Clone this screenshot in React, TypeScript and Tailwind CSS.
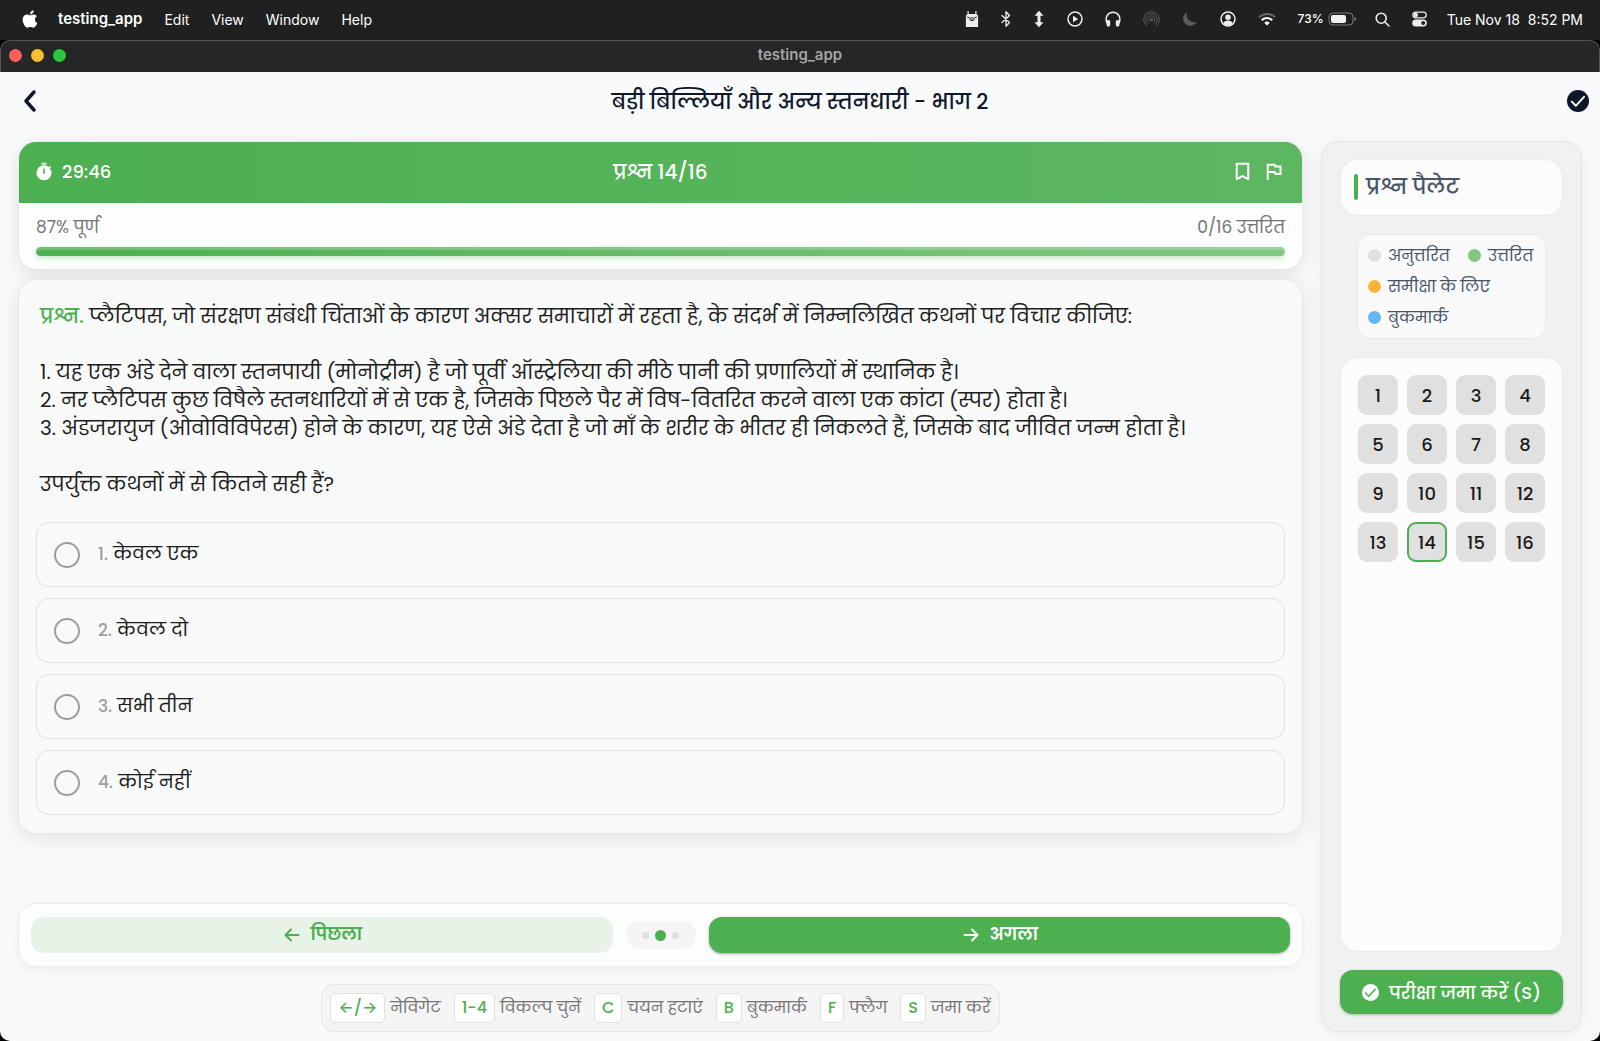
import React, { useState } from 'react';
import { FaApple } from 'react-icons/fa';
import { MdTimer } from 'react-icons/md';

interface Shortcut { keys: string; label: string; }

const MENUS = ['Edit', 'View', 'Window', 'Help'];

const QUESTION_INTRO = 'प्लैटिपस, जो संरक्षण संबंधी चिंताओं के कारण अक्सर समाचारों में रहता है, के संदर्भ में निम्नलिखित कथनों पर विचार कीजिए:';
const STATEMENTS = [
    '1. यह एक अंडे देने वाला स्तनपायी (मोनोट्रीम) है जो पूर्वी ऑस्ट्रेलिया की मीठे पानी की प्रणालियों में स्थानिक है।',
    '2. नर प्लैटिपस कुछ विषैले स्तनधारियों में से एक है, जिसके पिछले पैर में विष-वितरित करने वाला एक कांटा (स्पर) होता है।',
    '3. अंडजरायुज (ओवोविविपेरस) होने के कारण, यह ऐसे अंडे देता है जो माँ के शरीर के भीतर ही निकलते हैं, जिसके बाद जीवित जन्म होता है।',
];
const OPTIONS = ['केवल एक', 'केवल दो', 'सभी तीन', 'कोई नहीं'];

const LEGEND = [
    { color: 'bg-[#e0e0e0]', label: 'अनुत्तरित' },
    { color: 'bg-[#81c784]', label: 'उत्तरित' },
    { color: 'bg-[#ffb435]', label: 'समीक्षा के लिए' },
    { color: 'bg-[#64b5f6]', label: 'बुकमार्क' },
];

const SHORTCUTS: Shortcut[] = [
    { keys: '←/→', label: 'नेविगेट' },
    { keys: '1-4', label: 'विकल्प चुनें' },
    { keys: 'C', label: 'चयन हटाएं' },
    { keys: 'B', label: 'बुकमार्क' },
    { keys: 'F', label: 'फ्लैग' },
    { keys: 'S', label: 'जमा करें' },
];

const TOTAL = 16;

const StatusIcons = () => (
    <>
        <svg width="14" height="18" viewBox="0 0 14 18" fill="#ececec">
            <path d="M2.5 1h1.2v4h-1.2zM10.3 1h1.2v4h-1.2zM3.5 4h7c1.6 0 2.6 1 2.6 2.6V17H.9V6.600C.9 5 1.900 4 3.500 4z" />
            <path d="M2.200 7l2.300.8M11.800 7l-2.300.8M4.500 9.200a2.600 2 0 0 1 5 0a2.600 2 0 0 1-5 0zM7 9v1.200" stroke="#222" strokeWidth="1" fill="none" />
        </svg>
        <svg width="10" height="18" viewBox="0 0 10 18" fill="none" stroke="#ececec" strokeWidth="1.300" strokeLinejoin="round" strokeLinecap="round">
            <path d="M1 5.500l7.500 7L5 16.300V1.700l3.500 3.800L1 12.500" />
        </svg>
        <svg width="12" height="18" viewBox="0 0 12 18" fill="#ececec">
            <path d="M6 .8l4.500 5H7.500v6.400h3L6 17.200l-4.500-5h3V5.800h-3z" />
        </svg>
        <svg width="16" height="16" viewBox="0 0 16 16">
            <circle cx="8" cy="8" r="7" fill="none" stroke="#ececec" strokeWidth="1.500" />
            <path d="M6 4.800v6.400L11.200 8z" fill="#ececec" />
        </svg>
        <svg width="16" height="16" viewBox="0 0 16 16">
            <path d="M2 12.500C-.5 6 3 1.300 8 1.300s8.500 4.700 6 11.200" fill="none" stroke="#ececec" strokeWidth="1.500" />
            <rect x="1.600" y="9" width="3.600" height="6.600" rx="1.500" fill="#ececec" />
            <rect x="10.800" y="9" width="3.600" height="6.600" rx="1.500" fill="#ececec" />
        </svg>
        <svg width="17" height="17" viewBox="0 0 17 17" fill="none" stroke="#5c5c5c" strokeWidth="1">
            <path d="M4.300 15a7.800 7.800 0 1 1 8.400 0M5.200 12.800a5.600 5.600 0 1 1 6.600 0M6.500 11a3.400 3.400 0 1 1 4 0" />
            <circle cx="8.500" cy="8.500" r="1.300" fill="#5c5c5c" />
        </svg>
        <svg width="16" height="16" viewBox="0 0 16 16" fill="#5c5c5c">
            <path d="M5 1.200a7.200 7.200 0 1 0 9.800 9.600A7.600 7.600 0 0 1 5 1.200z" />
        </svg>
        <svg width="16" height="16" viewBox="0 0 16 16" fill="#ececec">
            <circle cx="8" cy="8" r="7" fill="none" stroke="#ececec" strokeWidth="1.500" />
            <circle cx="8" cy="6.300" r="2.700" />
            <path d="M3.200 12.400c.8-2 2.600-2.900 4.800-2.900s4 .9 4.800 2.900A6.500 6.500 0 0 1 8 14.500a6.500 6.500 0 0 1-4.800-2.100z" />
        </svg>
        <svg width="18" height="14" viewBox="0 0 18 14" fill="none" strokeWidth="2">
            <path d="M1 5.200a11.500 11.500 0 0 1 16 0" stroke="#686868" />
            <path d="M3.800 8.200a7.500 7.500 0 0 1 10.400 0" stroke="#fff" />
            <path d="M6.300 10.700a3.900 3.900 0 0 1 5.400 0L9 13.500z" fill="#fff" />
        </svg>
    </>
);

// Filled circle with the tick cut out in the colour behind it
const CheckBadge = ({ size, tick, weight }: { size: number; tick: string; weight: number }) => (
    <svg width={size} height={size} viewBox="0 0 22 22">
        <circle cx="11" cy="11" r="11" fill="currentColor" />
        <path d="M4.800 11.600l4 4.200L17 6.800" fill="none" stroke={tick} strokeWidth={weight} strokeLinecap="round" strokeLinejoin="round" />
    </svg>
);

const BookmarkIcon = ({ filled }: { filled: boolean }) => (
    <svg width="23" height="23" viewBox="0 0 23 23" fill={filled ? 'currentColor' : 'none'} stroke="currentColor" strokeWidth="2" strokeLinejoin="round">
        <path d="M5.700 3.700h11.600v15.400l-5.800-2.900-5.800 2.900z" />
    </svg>
);

const FlagIcon = ({ filled }: { filled: boolean }) => (
    <svg width="23" height="23" viewBox="0 0 23 23" fill={filled ? 'currentColor' : 'none'} stroke="currentColor" strokeWidth="2">
        <path d="M5.700 20V4.700h6.800l.8 1.900h5.200v7.300h-5l-.9-2H5.700" />
    </svg>
);

const ArrowIcon = ({ d }: { d: string }) => (
    <svg width="20" height="20" viewBox="0 0 20 20" fill="none" stroke="currentColor" strokeWidth="2" strokeLinecap="round" strokeLinejoin="round">
        <path d={d} />
    </svg>
);

const MenuBar = () => (
    <header className="flex h-10 items-center justify-between bg-[#202020] pr-[17px] pb-[2px] pl-5 font-['Inter',sans-serif] text-[14px] text-white">
        <nav className="flex items-center gap-[22px]">
            <FaApple size={20} />
            <span className="-ml-1 text-[15px] font-semibold">testing_app</span>
            {MENUS.map((m) => <button key={m}>{m}</button>)}
        </nav>
        <div className="flex items-center gap-[22px]">
            <StatusIcons />
            <div className="-mr-1 flex items-center gap-1 text-[12px] font-medium">
                73%
                <svg width="29" height="14" viewBox="0 0 29 14">
                    <rect x="1" y="1" width="24" height="12" rx="4" fill="none" stroke="#7a7a7a" />
                    <rect x="3" y="3" width="15" height="8" rx="2" fill="#f2f2f2" />
                    <path d="M26.500 5v4c1-.3 1.600-1.100 1.600-2s-.6-1.700-1.600-2z" fill="#7a7a7a" />
                </svg>
            </div>
            <svg width="15" height="15" viewBox="0 0 15 15" fill="none" stroke="#ececec" strokeWidth="1.600" strokeLinecap="round">
                <circle cx="6.200" cy="6.200" r="5" /><path d="M10 10l4 4" />
            </svg>
            <svg width="15" height="16" viewBox="0 0 15 16">
                <rect x=".8" y="1.200" width="13.400" height="5.600" rx="2.800" fill="none" stroke="#ececec" strokeWidth="1.300" />
                <circle cx="3.800" cy="4" r="2.200" fill="#ececec" />
                <rect x=".2" y="8.600" width="14.600" height="7" rx="3.500" fill="#ececec" />
                <circle cx="11.200" cy="12.100" r="2" fill="#202020" />
            </svg>
            <time className="-ml-[2px] whitespace-pre">Tue Nov 18  8:52 PM</time>
        </div>
    </header>
);

const TitleBar = () => (
    <div className="grid h-8 grid-cols-3 items-center rounded-t-[10px] border border-b-0 border-[#555] bg-[#262626] px-2 pb-[2px]">
        <div className="flex gap-[9px]">
            <button aria-label="Close" className="h-[13px] w-[13px] rounded-full bg-[#ff5f57]" />
            <button aria-label="Minimise" className="h-[13px] w-[13px] rounded-full bg-[#febc2e]" />
            <button aria-label="Zoom" className="h-[13px] w-[13px] rounded-full bg-[#28c840]" />
        </div>
        <span className="text-center font-['Inter',sans-serif] text-[15px] font-semibold text-[#a5a5a5]">testing_app</span>
    </div>
);

export default function App() {
  const [current, setCurrent] = useState(14);
  const [answers, setAnswers] = useState<Record<number, number>>({});
  const [bookmarks, setBookmarks] = useState<number[]>([]);
  const [flags, setFlags] = useState<number[]>([]);

  const answered = Object.keys(answers).length;
  const toggle = (list: number[]) => list.includes(current) ? list.filter(n => n !== current) : [...list, current];

  const tileColor = (n: number) => {
      if (flags.includes(n)) return 'bg-[#ffb435]';
      if (bookmarks.includes(n)) return 'bg-[#64b5f6]';
      return answers[n] !== undefined ? 'bg-[#81c784]' : 'bg-[#e0e0e0]';
  };

  return (
    <div className="flex min-h-screen flex-col bg-black font-['Poppins','Noto_Sans',sans-serif]">
      <MenuBar />
      <TitleBar />

      <div className="flex grow flex-col rounded-b-[10px] bg-[#f9fafc] pb-[9px]">
        <div className="flex h-[60px] items-center pr-[11px] pb-[2px] pl-[22px] text-[#0f172a]">
            <div className="flex flex-1">
                <button aria-label="Back">
                    <svg width="18" height="24" viewBox="0 0 18 24" fill="none" stroke="currentColor" strokeWidth="3.500" strokeLinecap="round" strokeLinejoin="round">
                        <path d="M12 3L4 12l8 9" />
                    </svg>
                </button>
            </div>
            <h1 className="-ml-[11px] pt-[2px] text-[21px] font-medium">बड़ी बिल्लियाँ और अन्य स्तनधारी - भाग 2</h1>
            <div className="flex flex-1 justify-end">
                <button aria-label="Submit"><CheckBadge size={22} tick="#f9fafc" weight={2} /></button>
            </div>
        </div>

        <div className="flex grow gap-[18px] px-[18px] pt-[9px]">
          <main className="flex min-w-0 grow flex-col">
            <section className="overflow-hidden rounded-[18px] border border-[#e9eaeb] bg-[#fcfdfc] shadow-[0_4px_18px_rgba(0,0,0,0.1)]">
                <div className="grid h-[61px] grid-cols-3 items-center bg-linear-to-r from-[#4caf50] to-[#5db761] px-[15px] pb-[2px] text-white">
                    <div className="flex items-center gap-2 text-[18px] font-medium"><MdTimer size={20} />29:46</div>
                    <h2 className="text-center text-[20px] font-medium">प्रश्न {current}/{TOTAL}</h2>
                    <div className="flex justify-end gap-2 pr-[2px]">
                        <button aria-label="Bookmark" onClick={() => setBookmarks(toggle(bookmarks))}>
                            <BookmarkIcon filled={bookmarks.includes(current)} />
                        </button>
                        <button aria-label="Flag" onClick={() => setFlags(toggle(flags))}>
                            <FlagIcon filled={flags.includes(current)} />
                        </button>
                    </div>
                </div>
                <div className="px-[17px] pt-3 pb-[13px]">
                    <div className="flex justify-between text-[17px] leading-[24px] text-[#757575]">
                        <span>87% पूर्ण</span>
                        <span>{answered}/{TOTAL} उत्तरित</span>
                    </div>
                    <div className="mt-2 h-[9px] rounded-full bg-linear-to-r from-[#4caf50] to-[#81c784] shadow-[0_2px_5px_rgba(76,175,80,0.3),inset_0_3px_0_rgba(255,255,255,0.2)]" />
                </div>
            </section>

            <section className="mt-[9px] rounded-[18px] border border-[#e6e8e8] bg-[#f8faf9] px-[17px] pt-[22px] pb-[18px] shadow-[0_4px_22px_rgba(0,0,0,0.1)]">
                <div className="px-1 text-[20px] leading-[28px] text-[#1e1e1e]">
                    <p><span className="font-medium text-[#4caf50]">प्रश्न.</span> {QUESTION_INTRO}</p>
                    <div className="my-7">{STATEMENTS.map(s => <p key={s}>{s}</p>)}</div>
                    <p>उपर्युक्त कथनों में से कितने सही हैं?</p>
                </div>
                <div className="mt-6 space-y-[11px]">
                    {OPTIONS.map((option, i) => (
                        <label key={option} className="flex h-[65px] cursor-pointer items-center gap-[18px] rounded-[13px] border border-[#dfe1e0] px-[17px]">
                            <input
                                type="radio"
                                name="answer"
                                checked={answers[current] === i}
                                onChange={() => setAnswers({ ...answers, [current]: i })}
                                className="h-[26px] w-[26px] appearance-none rounded-full border-2 border-[#9e9e9e] checked:border-8 checked:border-[#4caf50]"
                            />
                            <span className="text-[19px] text-[#1e1e1e]"><span className="text-[17px] font-medium text-[#9e9e9e]">{i + 1}.</span> {option}</span>
                        </label>
                    ))}
                </div>
            </section>

            <div className="mt-auto flex items-center gap-[13px] rounded-[18px] border border-[#ebecec] bg-[#fcfdfd] px-3 py-[13px] shadow-[0_3px_14px_rgba(0,0,0,0.05)]">
                <button onClick={() => setCurrent(Math.max(1, current - 1))} className="flex h-9 flex-1 items-center justify-center gap-[9px] rounded-[13px] bg-[#e8f3e8] text-[17px] font-semibold text-[#4caf50]">
                    <ArrowIcon d="M16.500 10h-13M9 4.500L3.500 10 9 15.500" />पिछला
                </button>
                <div className="flex h-7 w-[70px] items-center justify-center gap-[6px] rounded-full bg-[#f5f5f5]">
                    <span className="h-[7px] w-[7px] rounded-full bg-[#e0e0e0]" />
                    <span className="h-[11px] w-[11px] rounded-full bg-[#4caf50]" />
                    <span className="h-[7px] w-[7px] rounded-full bg-[#e0e0e0]" />
                </div>
                <button onClick={() => setCurrent(Math.min(TOTAL, current + 1))} className="flex h-9 flex-1 items-center justify-center gap-[9px] rounded-[13px] bg-[#4caf50] text-[17px] font-semibold text-white shadow-[0_1px_3px_rgba(0,0,0,0.35)]">
                    <ArrowIcon d="M3.500 10h13M11 4.500l5.500 5.500-5.500 5.500" />अगला
                </button>
            </div>

            <div className="mt-[17px] flex items-center gap-[13px] self-center rounded-[13px] border border-[#e6e7e8] bg-[#f5f5f5] px-2 py-[8px]">
                {SHORTCUTS.map((s) => (
                    <div key={s.keys} className="flex items-center gap-[5px] text-[16px] text-[#757575]">
                        <kbd className="rounded-[5px] border border-[#e0e0e0] bg-white px-[7px] font-['Poppins','Inter',sans-serif] leading-[28px] font-medium text-[#4caf50]">{s.keys}</kbd>
                        <span>{s.label}</span>
                    </div>
                ))}
            </div>
          </main>

          <aside className="flex w-[261px] shrink-0 flex-col gap-[18px] rounded-[18px] border border-[#e3e4e5] bg-[#f0f1f1] px-[18px] py-[17px] shadow-[0_3px_18px_rgba(0,0,0,0.06)]">
            <h2 className="flex h-[57px] items-center gap-2 rounded-[18px] border border-[#ebebeb] bg-[#fcfcfc] px-[13px] pb-[2px] text-[21px] font-medium text-[#475569]">
                <span className="h-[26px] w-1 rounded-full bg-[#4caf50]" />
                प्रश्न पैलेट
            </h2>
            <ul className="mx-[17px] flex flex-wrap gap-x-[18px] gap-y-[6px] rounded-[13px] border border-[#e9e9e9] bg-[#fafafa] px-[10px] py-[8px] text-[16px] leading-[25px] text-[#475569]">
                {LEGEND.map((l) => (
                    <li key={l.label} className="flex items-center gap-[7px]"><span className={`h-[13px] w-[13px] rounded-full ${l.color}`} />{l.label}</li>
                ))}
            </ul>
            <div className="grid grow grid-cols-4 content-start gap-[9px] rounded-[18px] border border-[#ebebeb] bg-[#fcfcfc] p-[17px]">
                {Array.from({ length: TOTAL }, (_, i) => i + 1).map((n) => (
                    <button
                        key={n}
                        onClick={() => setCurrent(n)}
                        className={`aspect-square rounded-[9px] text-[18px] font-medium text-[#1b1b1b] ${tileColor(n)} ${n === current ? 'border-2 border-[#4caf50]' : ''}`}
                    >
                        {n}
                    </button>
                ))}
            </div>
            <button className="flex h-11 items-center justify-center gap-[10px] rounded-[13px] bg-[#4caf50] text-[18px] font-medium text-white shadow-[0_1px_3px_rgba(0,0,0,0.25)]">
                <CheckBadge size={17} tick="#4caf50" weight={2} />परीक्षा जमा करें (S)
            </button>
          </aside>
        </div>
      </div>
    </div>
  );
}
